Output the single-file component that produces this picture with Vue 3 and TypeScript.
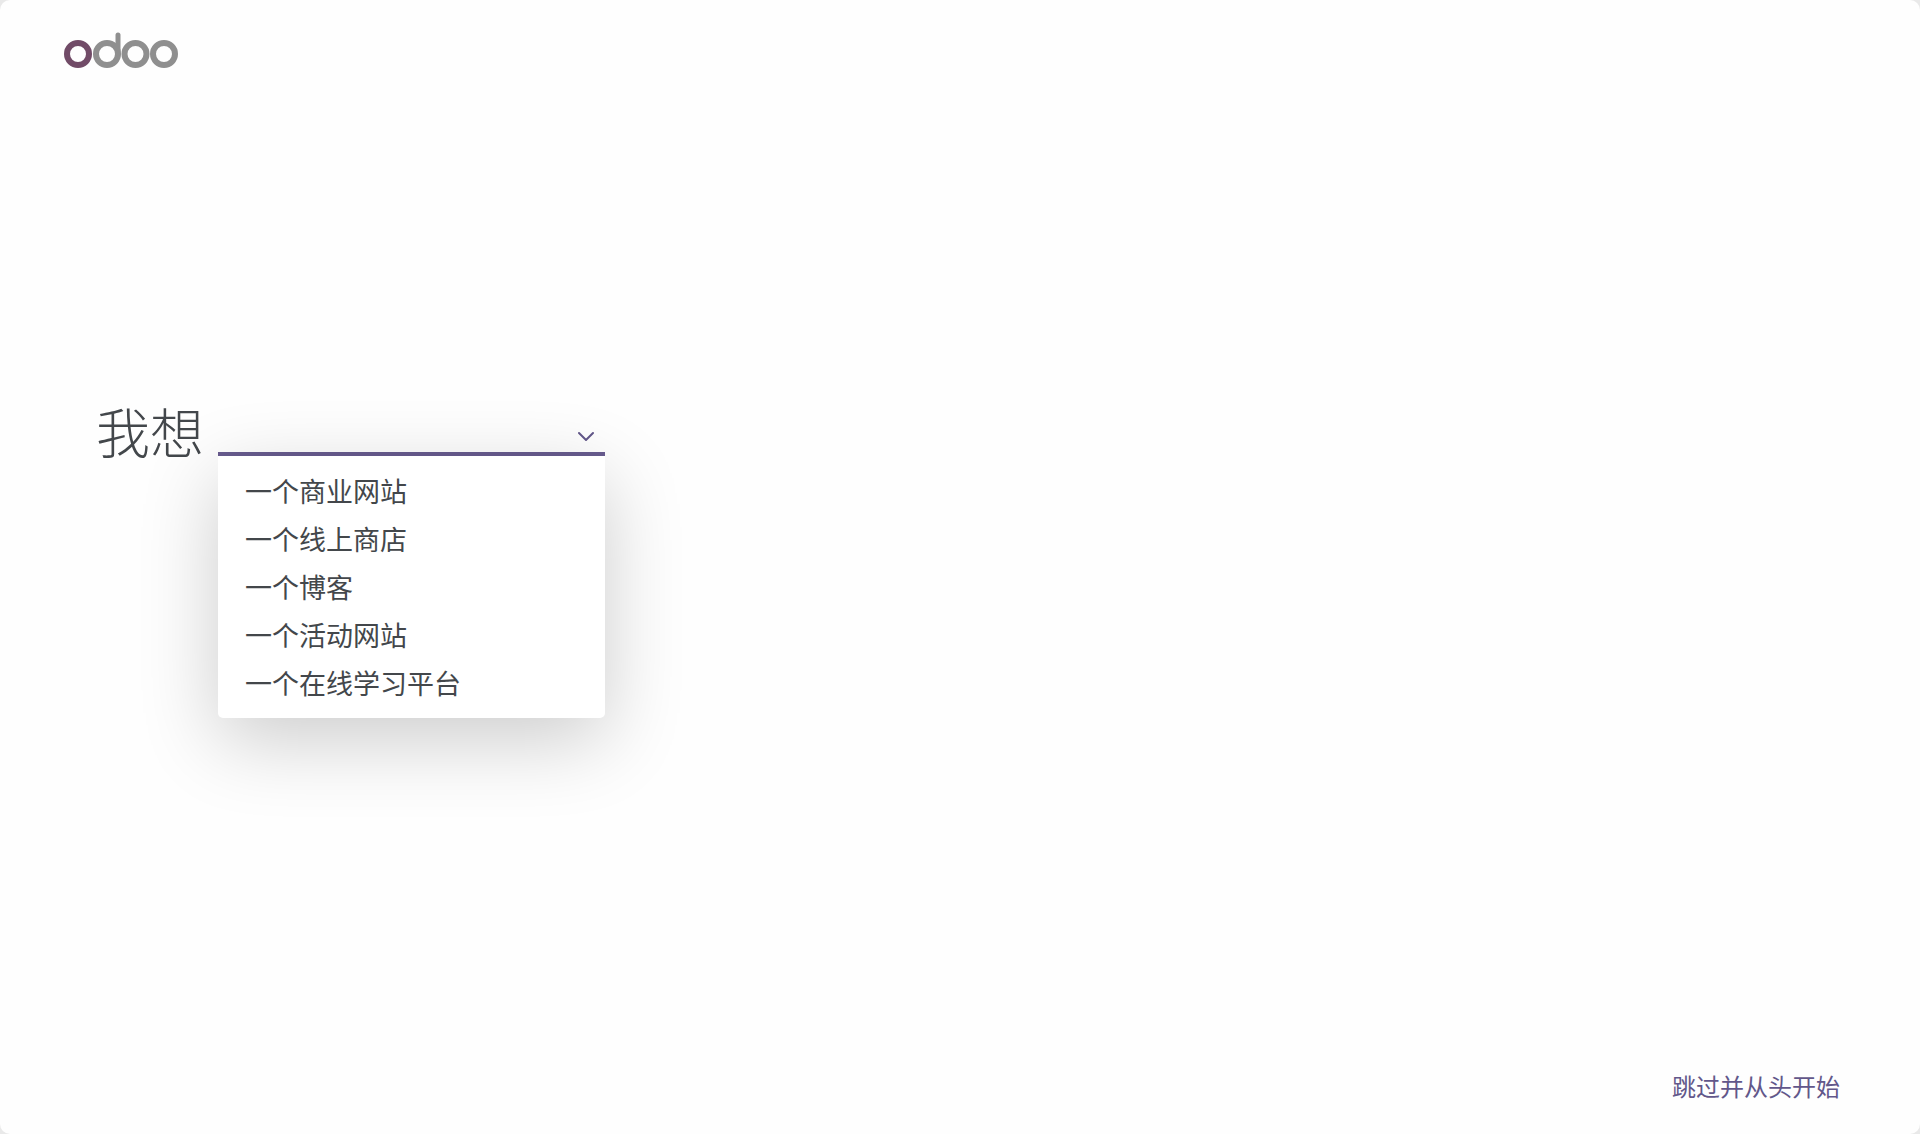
<script setup lang="ts">
import { ref } from 'vue'

const siteTypes: string[] = [
  '一个商业网站',
  '一个线上商店',
  '一个博客',
  '一个活动网站',
  '一个在线学习平台',
]

const open = ref(true)
const selected = ref('')

function choose(type: string) {
  selected.value = type
  open.value = false
}
</script>

<template>
  <div class="configurator">
    <header class="topbar">
      <a href="#" class="brand" aria-label="Odoo">
        <svg class="logo" width="116" height="40" viewBox="0 0 116 40" fill="none" stroke-width="6">
          <circle cx="14" cy="24" r="11" stroke="#714b67" />
          <g stroke="#8f8f8f">
            <circle cx="43" cy="24" r="11" />
            <path d="M54 24V5" stroke-width="5" stroke-linecap="round" />
            <circle cx="71.5" cy="24" r="11" />
            <circle cx="100" cy="24" r="11" />
          </g>
        </svg>
      </a>
    </header>

    <main class="question">
      <h1 id="site-question" class="prompt">我想</h1>
      <div class="picker">
        <button
          type="button"
          class="toggle"
          aria-haspopup="true"
          aria-labelledby="site-question"
          :aria-expanded="open"
          @click="open = !open"
        >
          <span class="value">{{ selected }}</span>
          <svg class="chevron" width="16" height="10" viewBox="0 0 16 10" fill="none" aria-hidden="true">
            <path d="M1 2L8 9L15 2" stroke="#62578a" stroke-width="2" stroke-linecap="round" />
          </svg>
        </button>
        <ul v-if="open" class="menu">
          <li v-for="type in siteTypes" :key="type">
            <button type="button" class="option" @click="choose(type)">{{ type }}</button>
          </li>
        </ul>
      </div>
    </main>

    <footer class="bottom">
      <a href="#" class="skip">跳过并从头开始</a>
    </footer>
  </div>
</template>

<style>
body {
  background: #e9e9e9;
}
</style>

<style scoped>
.configurator {
  box-sizing: border-box;
  display: flex;
  flex-direction: column;
  min-height: 100vh;
  border-radius: 10px;
  background: #fefefe;
  color: #43474b;
  font-family: "Noto Sans CJK SC", "Noto Sans", sans-serif;
}

.topbar {
  padding: 30px 64px 0;
}

.brand,
.logo {
  display: block;
  width: 116px;
}

.question {
  display: flex;
  align-items: flex-end;
  gap: 14px;
  padding: 336px 96px 0;
}

.prompt {
  margin: 0;
  font-size: 54px;
  line-height: 50px;
  font-weight: 300;
}

.picker {
  position: relative;
  width: 387px;
}

.toggle {
  box-sizing: border-box;
  display: flex;
  align-items: center;
  justify-content: space-between;
  width: 100%;
  height: 44px;
  padding: 8px 11px 0 27px;
  border: 0;
  border-bottom: 4px solid #685c8f;
  background: transparent;
  color: inherit;
  font: inherit;
  font-size: 27px;
  line-height: 32px;
  cursor: pointer;
}

.menu {
  position: absolute;
  top: 100%;
  left: 0;
  right: 0;
  margin: 0;
  padding: 13px 0;
  border-radius: 0 0 5px 5px;
  background: #fff;
  box-shadow: 0 22px 80px rgba(0, 0, 0, 0.2);
  list-style: none;
}

.menu li + li {
  margin-top: 4px;
}

.option {
  display: block;
  width: 100%;
  padding: 0 27px;
  border: 0;
  background: transparent;
  color: inherit;
  font: inherit;
  font-size: 27px;
  line-height: 44px;
  font-weight: 400;
  text-align: left;
  cursor: pointer;
}

.option:hover {
  background: #f1f1f4;
}

.bottom {
  display: flex;
  justify-content: flex-end;
  margin-top: auto;
  padding: 0 80px 32px;
}

.skip {
  color: #62578a;
  font-size: 24px;
  line-height: 32px;
  text-decoration: none;
}
</style>
